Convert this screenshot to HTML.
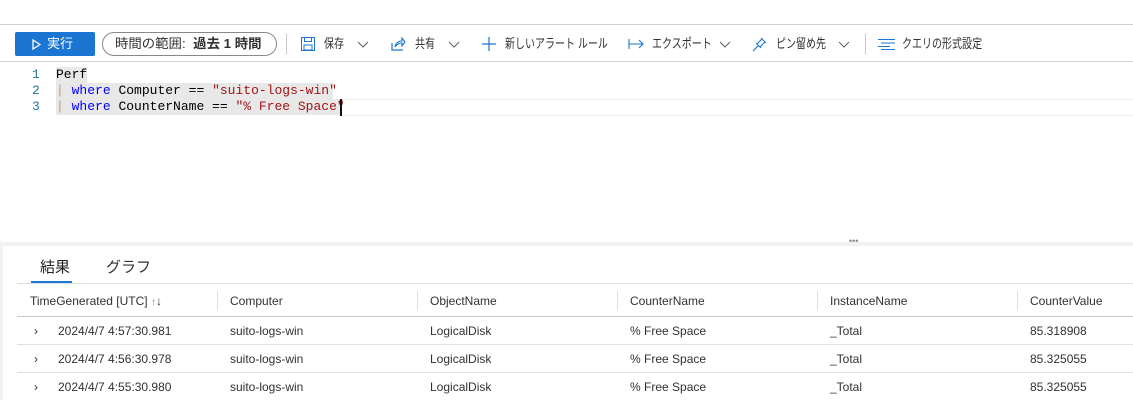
<!DOCTYPE html>
<html><head><meta charset="utf-8"><style>
*{margin:0;padding:0;box-sizing:border-box}
body{width:1133px;height:400px;overflow:hidden;background:#fff;font-family:"Liberation Sans","Noto Sans CJK JP",sans-serif;color:#323130;position:relative;font-size:13px}
.a{position:absolute;white-space:nowrap}
.hl{position:absolute;left:0;width:1133px;height:1px;background:#d2d0ce}
.tb{top:35px;font-size:13px;line-height:18px;transform:scaleX(0.77);transform-origin:left center}
.mono{font-family:"Liberation Mono","Noto Sans CJK JP",monospace;font-size:13px;line-height:16px}
.cell{font-size:12px;line-height:16px}
.sep{position:absolute;top:291px;width:1px;height:20px;background:#e1dfdd}
.chev{position:absolute;top:41px}
</style></head><body>
<div class="hl" style="top:24px"></div>
<div class="hl" style="top:61px"></div>
<div class="a" style="left:15px;top:32px;width:80px;height:24px;background:#1a76d2;border-radius:2px;color:#fff;font-size:13px;line-height:24px">
<svg style="position:absolute;left:17px;top:7px" width="9" height="11"><path d="M1 1 L8 5.5 L1 10 Z" fill="none" stroke="#fff" stroke-width="1.3"/></svg><span style="position:absolute;left:32px">実行</span></div>
<div class="a" style="left:102px;top:32px;width:175px;height:24px;border:1px solid #8a8886;border-radius:12px"></div>
<div class="a" style="left:115px;top:35px;font-size:13px;line-height:18px;transform:scaleX(1.03);transform-origin:left center">時間の範囲:&nbsp; <b>過去 1 時間</b></div>
<div class="a" style="left:286px;top:34px;width:1px;height:20px;background:#c8c6c4"></div>
<svg class="a" style="left:300px;top:36px" width="16" height="16"><rect x="1.5" y="1.5" width="13" height="13" fill="none" stroke="#1a76d2"/><rect x="4.5" y="1.5" width="7" height="4" fill="none" stroke="#1a76d2"/><rect x="4" y="9" width="8" height="5" fill="none" stroke="#1a76d2"/></svg>
<div class="a tb" style="left:324px">保存</div>
<svg class="chev" style="left:357px" width="12" height="7"><path d="M1 1L6 6L11 1" fill="none" stroke="#605e5c"/></svg>
<svg class="a" style="left:390px;top:36px" width="16" height="16"><path d="M2 7 V14 H13" fill="none" stroke="#1a76d2" stroke-width="1.2"/><path d="M5 11 C6 6 9 5 12 5 L12 2 L15 6 L12 10 L12 7 C9 7 7 8 5 11Z" fill="none" stroke="#1a76d2" stroke-width="1.1"/></svg>
<div class="a tb" style="left:415px">共有</div>
<svg class="chev" style="left:448px" width="12" height="7"><path d="M1 1L6 6L11 1" fill="none" stroke="#605e5c"/></svg>
<svg class="a" style="left:481px;top:36px" width="16" height="16"><path d="M8 1V15M1 8H15" stroke="#1a76d2" stroke-width="1.2"/></svg>
<div class="a tb" style="left:505px">新しいアラート ルール</div>
<svg class="a" style="left:628px;top:38px" width="16" height="12"><path d="M1 1V11M1 6H15M11 2L15 6L11 10" fill="none" stroke="#1a76d2" stroke-width="1.1"/></svg>
<div class="a tb" style="left:652px">エクスポート</div>
<svg class="chev" style="left:719px" width="12" height="7"><path d="M1 1L6 6L11 1" fill="none" stroke="#605e5c"/></svg>
<svg class="a" style="left:752px;top:36px" width="16" height="16"><path d="M1 15L6 10M4 7L9 12M5 8L10 3L13 6L8 11M9 2L14 7" fill="none" stroke="#1a76d2" stroke-width="1.1"/></svg>
<div class="a tb" style="left:776px">ピン留め先</div>
<svg class="chev" style="left:838px" width="12" height="7"><path d="M1 1L6 6L11 1" fill="none" stroke="#605e5c"/></svg>
<div class="a" style="left:865px;top:34px;width:1px;height:20px;background:#c8c6c4"></div>
<svg class="a" style="left:878px;top:38px" width="18" height="12"><path d="M0 1.5H17M3 5H17M0 8.5H12M3 11.5H17" stroke="#1a76d2" stroke-width="1"/></svg>
<div class="a tb" style="left:902px">クエリの形式設定</div>
<div class="a" style="left:56px;top:67px;width:31px;height:16px;background:#e8e8e8"></div>
<div class="a" style="left:56px;top:83px;width:277px;height:16px;background:#e8e8e8"></div>
<div class="a" style="left:56px;top:99px;width:284px;height:16px;background:#e8e8e8"></div>
<div class="a" style="left:340px;top:99px;width:793px;height:17px;border-top:1px solid #eee;border-bottom:1px solid #eee"></div>
<div class="a mono" style="left:32px;top:67px;color:#237893">1<br>2<br>3</div>
<div class="a mono" style="left:56px;top:67px;color:#000">Perf<br><span style="color:#c0a070">|</span> <span style="color:#00f">where</span> Computer == <span style="color:#a31515">"suito-logs-win"</span><br><span style="color:#c0a070">|</span> <span style="color:#00f">where</span> CounterName == <span style="color:#a31515">"% Free Space"</span></div>
<div class="a" style="left:340px;top:99px;width:2px;height:17px;background:#111"></div>
<div class="a" style="left:0;top:242px;width:1133px;height:4px;background:#f3f2f1"></div>
<div class="a" style="left:0;top:242px;width:3px;height:158px;background:#f3f2f1"></div>
<div class="a" style="left:849px;top:236px;font-size:9px;color:#888">•••</div>
<div class="a" style="left:40px;top:258px;font-size:15px;line-height:20px;color:#201f1e">結果</div>
<div class="a" style="left:106px;top:258px;font-size:15px;line-height:20px;color:#323130">グラフ</div>
<div class="a" style="left:31px;top:281px;width:41px;height:2px;background:#1a76d2"></div>
<div class="a" style="left:17px;top:283px;width:1116px;height:1px;background:#e1dfdd"></div>
<div class="a cell" style="left:30px;top:293px">TimeGenerated [UTC] <span style="color:#888;font-size:10px">↑</span>↓</div>
<div class="a cell" style="left:230px;top:293px">Computer</div>
<div class="a cell" style="left:430px;top:293px">ObjectName</div>
<div class="a cell" style="left:630px;top:293px">CounterName</div>
<div class="a cell" style="left:830px;top:293px">InstanceName</div>
<div class="a cell" style="left:1030px;top:293px">CounterValue</div>
<div class="sep" style="left:217px"></div><div class="sep" style="left:417px"></div><div class="sep" style="left:617px"></div><div class="sep" style="left:817px"></div><div class="sep" style="left:1017px"></div>
<div class="a" style="left:17px;top:316px;width:1116px;height:1px;background:#c8c6c4"></div>
<div class="a" style="left:17px;top:344px;width:1116px;height:1px;background:#e1dfdd"></div>
<div class="a" style="left:17px;top:372px;width:1116px;height:1px;background:#e1dfdd"></div>
<div class="a cell" style="left:34px;top:317px;line-height:28px">›<br>›<br>›</div>
<div class="a cell" style="left:58px;top:317px;line-height:28px">2024/4/7 4:57:30.981<br>2024/4/7 4:56:30.978<br>2024/4/7 4:55:30.980</div>
<div class="a cell" style="left:230px;top:317px;line-height:28px">suito-logs-win<br>suito-logs-win<br>suito-logs-win</div>
<div class="a cell" style="left:430px;top:317px;line-height:28px">LogicalDisk<br>LogicalDisk<br>LogicalDisk</div>
<div class="a cell" style="left:630px;top:317px;line-height:28px">% Free Space<br>% Free Space<br>% Free Space</div>
<div class="a cell" style="left:830px;top:317px;line-height:28px">_Total<br>_Total<br>_Total</div>
<div class="a cell" style="left:1030px;top:317px;line-height:28px">85.318908<br>85.325055<br>85.325055</div>
</body></html>
